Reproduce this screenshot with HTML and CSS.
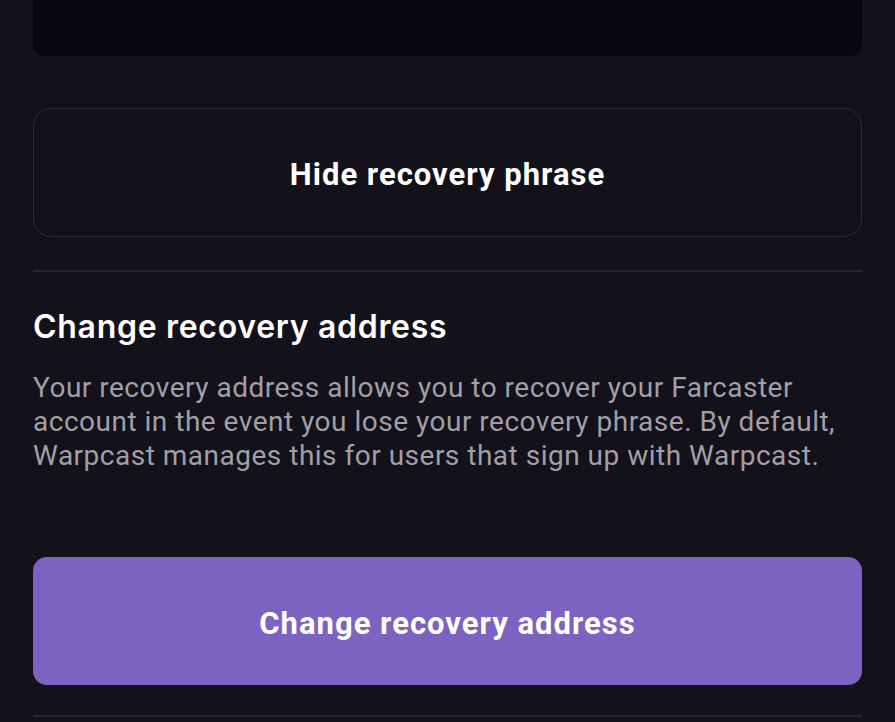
FILE: index.html
```html
<!DOCTYPE html>
<html lang="en">
<head>
<meta charset="utf-8">
<link rel="stylesheet" href="styles.css">
</head>
<body>
<main class="page">
  <div class="phrase-card">
    <p class="phrase-text">apple pulse orbit quiet grape</p>
  </div>
  <button class="btn-outline">Hide recovery phrase</button>
  <hr class="divider">
  <section class="section">
    <h2 class="section-title">Change recovery address</h2>
    <p class="section-desc">Your recovery address allows you to recover your Farcaster account in the event you lose your recovery phrase. By default, Warpcast manages this for users that sign up with Warpcast.</p>
  </section>
  <button class="btn-primary">Change recovery address</button>
  <hr class="divider divider-bottom">
</main>
</body>
</html>
```

FILE: styles.css
```css
html, body {
  margin: 0;
  padding: 0;
  background: #131119;
  height: 100%;
  overflow: hidden;
}
.page {
  padding: 0 33px;
  display: flex;
  flex-direction: column;
  font-family: Roboto, "Noto Sans", sans-serif;
}
.phrase-card {
  margin-top: -60px;
  height: 116px;
  background: #08070f;
  border-radius: 0 0 12px 12px;
  box-sizing: border-box;
  padding: 26px 48px 0;
}
.phrase-text {
  margin: 0;
  font-size: 26px;
  line-height: 32px;
  color: #8f8d96;
}
.btn-outline {
  margin-top: 52px;
  height: 129px;
  padding-top: 5px;
  border: 1.5px solid #2e2c37;
  border-radius: 18px;
  background: transparent;
  color: #ffffff;
  font-family: Roboto, sans-serif;
  font-weight: 700;
  font-size: 31px;
  letter-spacing: 1px;
  cursor: pointer;
}
.divider {
  margin: 33px 0 0;
  border: none;
  border-top: 2px solid #27252e;
}
.section {
  margin-top: 36px;
}
.section-title {
  margin: 0;
  font-family: Inter, sans-serif;
  font-weight: 600;
  font-size: 32px;
  line-height: 38px;
  letter-spacing: 0.7px;
  color: #ffffff;
}
.section-desc {
  margin: 25px 0 0;
  font-size: 28px;
  line-height: 34px;
  letter-spacing: 0.5px;
  color: #a19fa7;
}
.btn-primary {
  margin-top: 84px;
  height: 128px;
  padding-top: 5px;
  border: none;
  border-radius: 14px;
  background: #7c62c1;
  color: #ffffff;
  font-family: Roboto, sans-serif;
  font-weight: 700;
  font-size: 31px;
  letter-spacing: 1px;
  cursor: pointer;
}
.divider-bottom {
  margin-top: 30px;
}
```
